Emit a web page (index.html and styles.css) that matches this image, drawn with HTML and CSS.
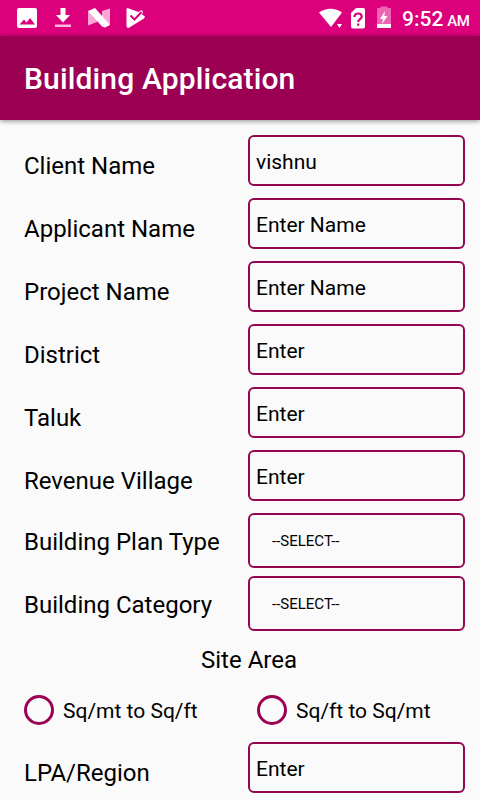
FILE: index.html
```
<!DOCTYPE html>
<html lang="en">
<head>
  <meta charset="UTF-8" />
  <meta name="viewport" content="width=device-width, initial-scale=1.0"/>
  <title>Building Application</title>
  <link rel="stylesheet" href="styles.css">
</head>
<body>
  <div class="status-bar">
    <svg class="status-icons" width="150" height="36" viewBox="0 0 150 36">
      <path fill="#fff" fill-rule="evenodd" d="M19 8h16a2 2 0 0 1 2 2v16a2 2 0 0 1-2 2H19a2 2 0 0 1-2-2V10a2 2 0 0 1 2-2zM19.500 24.500h15.500l-5-6.500-3.500 4.500-2.500-3z"/>
      <path fill="#fff" d="M60.500 8h5v7h4.500l-7 7.500-7-7.500h4.500z"/>
      <path fill="#ffb5dc" d="M55 24.500h16V27H55z"/>
      <path fill="#fba6d4" d="M88 11l9 6v5l-9 3.500zM102 11l8-2.500V25l-8-6z"/>
      <path fill="#fff" d="M88 11l7-3 15 17-5 2.500-3-1z"/>
      <path fill="#fff" d="M127.500 8l11 4 3-2 1.500 2-1 2.500 3 2-1 2-15.500 9.500q-2 0-2-2V9.500q0-1.500 1-1.500z"/>
      <path fill="none" stroke="#dd007c" stroke-width="2" d="M130.500 15.500l4 4 7-7.500"/>
    </svg>
    <svg class="status-icons" width="78" height="36" viewBox="316 0 78 36">
      <path fill="#fff" d="M319 12.500q11.500-7.500 23 0L331 27z"/>
      <path fill="#fff" d="M337 24h5l-2.500 4z"/>
      <path fill="#fff" d="M356 8h7.500q1.500 0 1.500 1.500v17q0 2-2 2h-10q-2 0-2-2V13z"/>
      <path fill="none" stroke="#dd007c" stroke-width="2.200" d="M354.500 17q0-3.500 3.600-3.500t3.600 3.200c0 2.500-3.500 2.300-3.500 5.300M358.200 23.500v2.300"/>
      <path fill="#f064b4" d="M377 8h3.500V6.500h7V8h3.500v16h-14z"/>
      <path fill="#fff" d="M377 24h14v4h-14zM385 11l-5 8h3l-1 5 5.500-8h-3.200z"/>
    </svg>
    <span class="time">9:52</span>
    <span class="ampm">AM</span>
  </div>
  <header class="toolbar">
    <h1>Building Application</h1>
  </header>
  <form class="form">
    <div class="row">
      <label for="client">Client Name</label>
      <input type="text" id="client" value="vishnu" />
    </div>
    <div class="row">
      <label for="applicant">Applicant Name</label>
      <input type="text" id="applicant" placeholder="Enter Name" />
    </div>
    <div class="row">
      <label for="project">Project Name</label>
      <input type="text" id="project" placeholder="Enter Name" />
    </div>
    <div class="row">
      <label for="district">District</label>
      <input type="text" id="district" placeholder="Enter" />
    </div>
    <div class="row">
      <label for="taluk">Taluk</label>
      <input type="text" id="taluk" placeholder="Enter" />
    </div>
    <div class="row">
      <label for="village">Revenue Village</label>
      <input type="text" id="village" placeholder="Enter" />
    </div>
    <div class="row select-row">
      <label for="plan">Building Plan Type</label>
      <select id="plan"><option>--SELECT--</option></select>
    </div>
    <div class="row select-row">
      <label for="category">Building Category</label>
      <select id="category"><option>--SELECT--</option></select>
    </div>
    <h2>Site Area</h2>
    <div class="radios">
      <label><input type="radio" name="unit" />Sq/mt to Sq/ft</label>
      <label><input type="radio" name="unit" />Sq/ft to Sq/mt</label>
    </div>
    <div class="row">
      <label for="lpa">LPA/Region</label>
      <input type="text" id="lpa" placeholder="Enter" />
    </div>
  </form>
</body>
</html>
```
FILE: styles.css
```
* {
  box-sizing: border-box;
}
body {
  margin: 0;
  height: 800px;
  overflow: hidden;
  background: #fafafa;
  color: #000;
  font-family: Roboto, sans-serif;
}
.status-bar {
  display: flex;
  align-items: baseline;
  height: 36px;
  background: #dd007c;
  color: #fff;
}
.status-icons {
  display: block;
  flex: none;
  align-self: flex-start;
}
.status-icons + .status-icons {
  margin-left: 166px;
}
.time {
  margin-left: 8px;
  font-size: 21px;
  font-weight: 500;
  line-height: 38px;
}
.ampm {
  margin-left: 4px;
  font-size: 15px;
  font-weight: 500;
  letter-spacing: -0.5px;
}
.toolbar {
  display: flex;
  align-items: center;
  height: 84px;
  padding: 1px 24px 0;
  background: #9c0052;
  box-shadow: 0 1px 5px rgba(0, 0, 0, 0.45);
}
h1 {
  margin: 0;
  color: #fff;
  font-size: 30px;
  font-weight: 500;
  letter-spacing: 0.15px;
}
.form {
  padding: 15px 15px 0 24px;
}
.row {
  display: grid;
  grid-template-columns: 224px 217px;
  height: 51px;
  margin-bottom: 12px;
}
.row label {
  padding-top: 17px;
  font-size: 24px;
  line-height: 28px;
}
.row input,
.row select {
  width: 100%;
  height: 100%;
  border: 2px solid #930750;
  border-radius: 6px;
  background: transparent;
  color: #000;
  font-family: inherit;
  outline: none;
}
.row input {
  padding: 3px 6px 0;
  font-size: 21px;
}
.row input::placeholder {
  color: #000;
  opacity: 1;
}
.select-row {
  height: 55px;
  margin-bottom: 8px;
}
.select-row label {
  padding-top: 15px;
}
.row select {
  padding: 0 22px;
  font-size: 15px;
  appearance: none;
}
h2 {
  margin: 15px 0 0;
  padding-left: 9px;
  font-size: 24px;
  font-weight: 400;
  line-height: 28px;
  text-align: center;
}
.radios {
  display: grid;
  grid-template-columns: 233px 1fr;
  height: 30px;
  margin: 21px 0 17px;
}
.radios label {
  display: flex;
  align-items: center;
  padding-top: 1px;
  font-size: 21px;
}
.radios input {
  width: 30px;
  height: 30px;
  margin: -1px 9px 0 0;
  border: 3px solid #9c0052;
  border-radius: 50%;
  appearance: none;
}
```
